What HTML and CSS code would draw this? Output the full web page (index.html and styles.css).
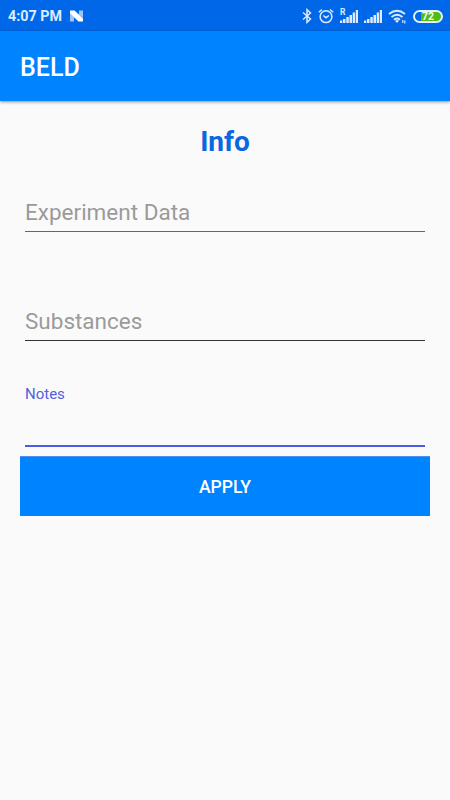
FILE: index.html
```html
<!DOCTYPE html>
<html lang="en">
<head>
<meta charset="utf-8">
<title>BELD</title>
<link rel="stylesheet" href="styles.css">
</head>
<body>
<header class="status">
  <span class="clock">4:07 PM</span>
  <svg class="nougat" width="15" height="12" viewBox="0 0 15 12"><path d="M1 3.500 5 7v4.500H1zM10 .5h4V8l-4-3.500z" fill="#9cc6fa"/><path d="M1 .5h4.500L14 8.500v3H9.500L1 3.500z" fill="#fff"/></svg>
  <div class="indicators">
    <svg width="10" height="16" viewBox="0 0 10 16" fill="none" stroke="#dcebff" stroke-width="1.500"><path d="M1 4.500 8.500 11 5 14.300V1.700L8.500 5 1 11.500"/></svg>
    <svg class="alarm" width="16" height="16" viewBox="0 0 16 16" fill="none" stroke="#dcebff" stroke-width="1.500"><circle cx="8" cy="8.700" r="5.900"/><path d="M.8 4.200 4 1.500M15.200 4.200 12 1.500M5.300 7.500 8 9.700l3-2.200"/></svg>
    <div class="cell">
      <span class="roaming">R</span>
      <svg width="18" height="13" viewBox="0 0 18 13" fill="#dcebff"><path d="M0 10.500h2.300V13H0zM3 9h2.500v4H3zM6.300 7h2.500v6H6.300zM9.500 5H12v8H9.500zM12.700 2.500h2.400V13h-2.400zM15.800 0h2.200v13h-2.200z"/></svg>
    </div>
    <svg class="signal" width="18" height="13" viewBox="0 0 18 13" fill="#dcebff"><path d="M0 10.500h2.300V13H0zM3 9h2.500v4H3zM6.300 7h2.500v6H6.300zM9.500 5H12v8H9.500zM12.700 2.500h2.400V13h-2.400zM15.800 0h2.200v13h-2.200z"/></svg>
    <svg class="wifi" width="19" height="15" viewBox="0 0 19 15" fill="none" stroke="#dcebff" stroke-width="1.800"><path d="M1 5q8-6.500 16 0M3.500 8q5.500-4.600 11 0M6 10.700q3-2.500 6 0"/><path d="M7 11.700Q9 10.200 11 11.700L9 14z" fill="#dcebff" stroke="none"/><path d="M14.800 11v3M16.800 11.500v3" stroke-width="1.200"/></svg>
    <span class="battery"><span class="charge">72</span></span>
  </div>
</header>
<div class="toolbar">BELD</div>
<main>
  <h1>Info</h1>
  <div class="field experiment">Experiment Data</div>
  <div class="field substances">Substances</div>
  <div class="notes">Notes</div>
  <button>APPLY</button>
</main>
</body>
</html>
```
FILE: styles.css
```css
* { box-sizing: border-box; }
body { margin: 0; height: 800px; background: #fafafa; font-family: Roboto, sans-serif; overflow: hidden; }
.status { height: 31px; background: #0068e8; display: flex; align-items: center; padding: 1px 7px 0 8px; color: #dcebff; }
.clock { font-size: 14.3px; font-weight: 700; line-height: 18px; width: 54px; white-space: nowrap; }
.nougat { margin-left: 7px; }
.indicators { margin-left: auto; display: flex; align-items: center; }
.alarm { margin-left: 6px; }
.cell { display: flex; width: 18px; height: 13px; margin-left: 6px; position: relative; }
.roaming { position: absolute; left: 0; top: -2px; font-size: 8.5px; line-height: 9px; font-weight: 700; }
.signal { margin-left: 6px; }
.wifi { margin-left: 6px; }
.battery { width: 30px; height: 13px; margin-left: 6px; padding: 1px; border: 2px solid #e5f1ff; border-radius: 7px; background: linear-gradient(90deg, transparent 22%, #4dbd14 22%); }
.charge { display: block; color: #fff; font-size: 10.5px; font-weight: 700; line-height: 8px; text-align: center; }
.toolbar { height: 70px; background: #0083ff; color: #fff; padding: 19px 20px; font-size: 25px; font-weight: 500; line-height: 36px; box-shadow: 0 1px 3px rgba(0, 0, 0, .45); white-space: nowrap; }
main { padding: 23px 20px 0; }
h1 { margin: 0; color: #0868e0; font-size: 28px; font-weight: 700; line-height: 36px; text-align: center; }
.field { margin: 0 5px; color: #9a9a9a; font-size: 22.5px; line-height: 29px; height: 34px; border-bottom: 1px solid #666; }
.experiment { margin-top: 38px; }
.substances { margin-top: 75px; border-color: #333; }
.notes { margin: 43px 5px 0; height: 63px; color: #5360e0; font-size: 15px; line-height: 20px; border-bottom: 2px solid #4a5ce8; }
button { display: block; width: 100%; height: 60px; margin: 9px 0 0; padding: 0; border: 0; border-top: 1px solid #4d91ef; background: #0083ff; color: #fff; font: 500 17.6px Roboto, sans-serif; }
```
